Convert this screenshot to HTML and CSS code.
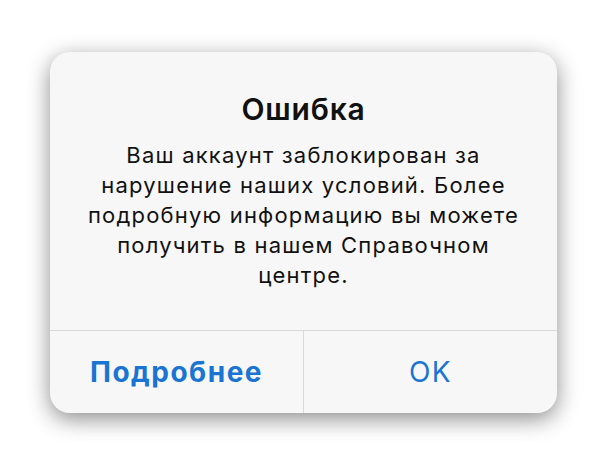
FILE: index.html
```html
<!DOCTYPE html>
<html lang="ru">
<head>
    <meta charset="UTF-8" />
    <meta name="viewport" content="width=device-width, initial-scale=1.0"/>
    <title>Ошибка</title>
    <link rel="stylesheet" href="styles.css">
</head>
<body>
    <div class="alert">
        <div class="alert-content">
            <h2>Ошибка</h2>
            <p>Ваш аккаунт заблокирован за<br>нарушение наших условий. Более<br>подробную информацию вы можете<br>получить в нашем Справочном<br>центре.</p>
        </div>
        <div class="alert-actions">
            <button class="bold">Подробнее</button>
            <button>OK</button>
        </div>
    </div>
</body>
</html>
```

FILE: styles.css
```css
body {
    margin: 0;
    padding: 52px 0 0 50px;
    background: #ffffff;
    font-family: Inter, "Liberation Sans", Arial, sans-serif;
    height: 461px;
    box-sizing: border-box;
    overflow: hidden;
}

.alert {
    width: 507px;
    height: 361px;
    background: #f7f7f7;
    border-radius: 20px;
    box-shadow: 0 6px 22px rgba(0, 0, 0, 0.45);
    display: flex;
    flex-direction: column;
    overflow: hidden;
}

.alert-content {
    height: 278px;
    box-sizing: border-box;
    padding: 39px 6px 0;
    text-align: center;
    color: #111;
}

h2 {
    margin: 0;
    font-size: 30px;
    font-weight: 600;
    line-height: 36px;
    letter-spacing: 0.8px;
}

p {
    margin: 13px 0 0;
    font-size: 22px;
    line-height: 30px;
    letter-spacing: 1.2px;
}

.alert-actions {
    flex: 1;
    display: flex;
    border-top: 1px solid #d9d9d9;
}

button {
    flex: 1;
    border: none;
    background: none;
    font-family: inherit;
    font-size: 28px;
    letter-spacing: 1.5px;
    color: #1a74d2;
    padding: 0;
}

button + button {
    border-left: 1px solid #d9d9d9;
}

.bold {
    font-weight: 700;
}
```
